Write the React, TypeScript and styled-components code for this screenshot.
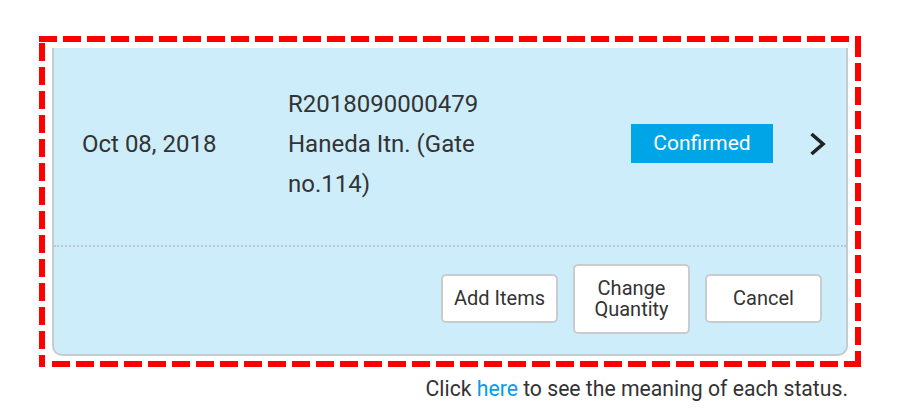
import React from "react";
import styled, { createGlobalStyle } from "styled-components";

const GlobalStyle = createGlobalStyle`
    body {
        margin: 0;
        background: #ffffff;
        font-family: Roboto, "Liberation Sans", Arial, sans-serif;
        color: #333333;
    }
`;

interface Order {
    date: string,
    number: string,
    place: string,
    status: string,
}

const order: Order = {
    date: "Oct 08, 2018",
    number: "R2018090000479",
    place: "Haneda Itn. (Gate no.114)",
    status: "Confirmed",
};

const App: React.FC = () => {
    return (
        <Page>
            <GlobalStyle />
            <Frame>
                <Card>
                    <Row>
                        <DateCol>{order.date}</DateCol>
                        <Info>
                            <div>{order.number}</div>
                            <div>{order.place}</div>
                        </Info>
                        <Status>{order.status}</Status>
                        <Chevron viewBox="0 0 18 26" aria-hidden="true">
                            <polyline points="2.5,3 14,13 2.5,23" />
                        </Chevron>
                    </Row>
                    <Actions>
                        <ActionBtn>Add Items</ActionBtn>
                        <ActionBtn>Change<br />Quantity</ActionBtn>
                        <ActionBtn>Cancel</ActionBtn>
                    </Actions>
                </Card>
            </Frame>
            <Note>
                Click <Link href="#">here</Link> to see the meaning of each status.
            </Note>
        </Page>
    );
};

// dashes 18px long with 6px gaps, like the red marker box in the picture
const dashH = "repeating-linear-gradient(90deg, #ff0000 0 18px, transparent 18px 24px)";
const dashV = "repeating-linear-gradient(180deg, #ff0000 0 18px, transparent 18px 24px)";

const Page = styled.div`
    width: 822px;
    padding: 36px 0 0 39px;
`;
const Frame = styled.div`
    padding: 12px 13px 11px 13px;
    background:
        ${dashH} left top / 100% 6px no-repeat,
        ${dashH} 13px bottom / 100% 6px no-repeat,
        ${dashV} left 7px / 6px 100% no-repeat,
        ${dashV} right 3px / 6px 100% no-repeat;
`;
const Card = styled.div`
    background: #cdedfb;
    border: 2px solid #c6cbce;
    border-top: none;
    border-radius: 0 0 10px 10px;
`;
const Row = styled.div`
    display: flex;
    align-items: center;
    height: 191px;
    padding: 0 0 6px 28px;
    border-bottom: 2px dotted #bfc7cc;
    font-size: 24px;
    line-height: 40px;
`;
const DateCol = styled.div`
    width: 206px;
    flex-shrink: 0;
`;
const Info = styled.div`
    width: 220px;
    flex-shrink: 0;
`;
const Status = styled.div`
    margin-left: auto;
    width: 142px;
    height: 39px;
    background: #00a5e8;
    color: #ffffff;
    font-size: 21px;
    line-height: 39px;
    text-align: center;
`;
const Chevron = styled.svg`
    width: 18px;
    height: 26px;
    margin: 0 19px 0 36px;
    fill: none;
    stroke: #222222;
    stroke-width: 3.6;
`;
const Actions = styled.div`
    display: flex;
    justify-content: flex-end;
    align-items: center;
    gap: 15px;
    height: 103px;
    padding: 0 24px 4px 0;
`;
const ActionBtn = styled.button`
    width: 117px;
    padding: 12px 0;
    background: #ffffff;
    border: 2px solid #c8cccf;
    border-radius: 5px;
    font-family: Roboto, "Liberation Sans", Arial, sans-serif;
    font-size: 20px;
    line-height: 21px;
    color: #333333;
    cursor: pointer;
`;
const Note = styled.p`
    margin: 8px 0 0 0;
    text-align: right;
    padding-right: 13px;
    font-size: 21.2px;
    line-height: 28px;
    color: #333333;
`;
const Link = styled.a`
    color: #00a0e9;
    text-decoration: none;
`;

export default App;
